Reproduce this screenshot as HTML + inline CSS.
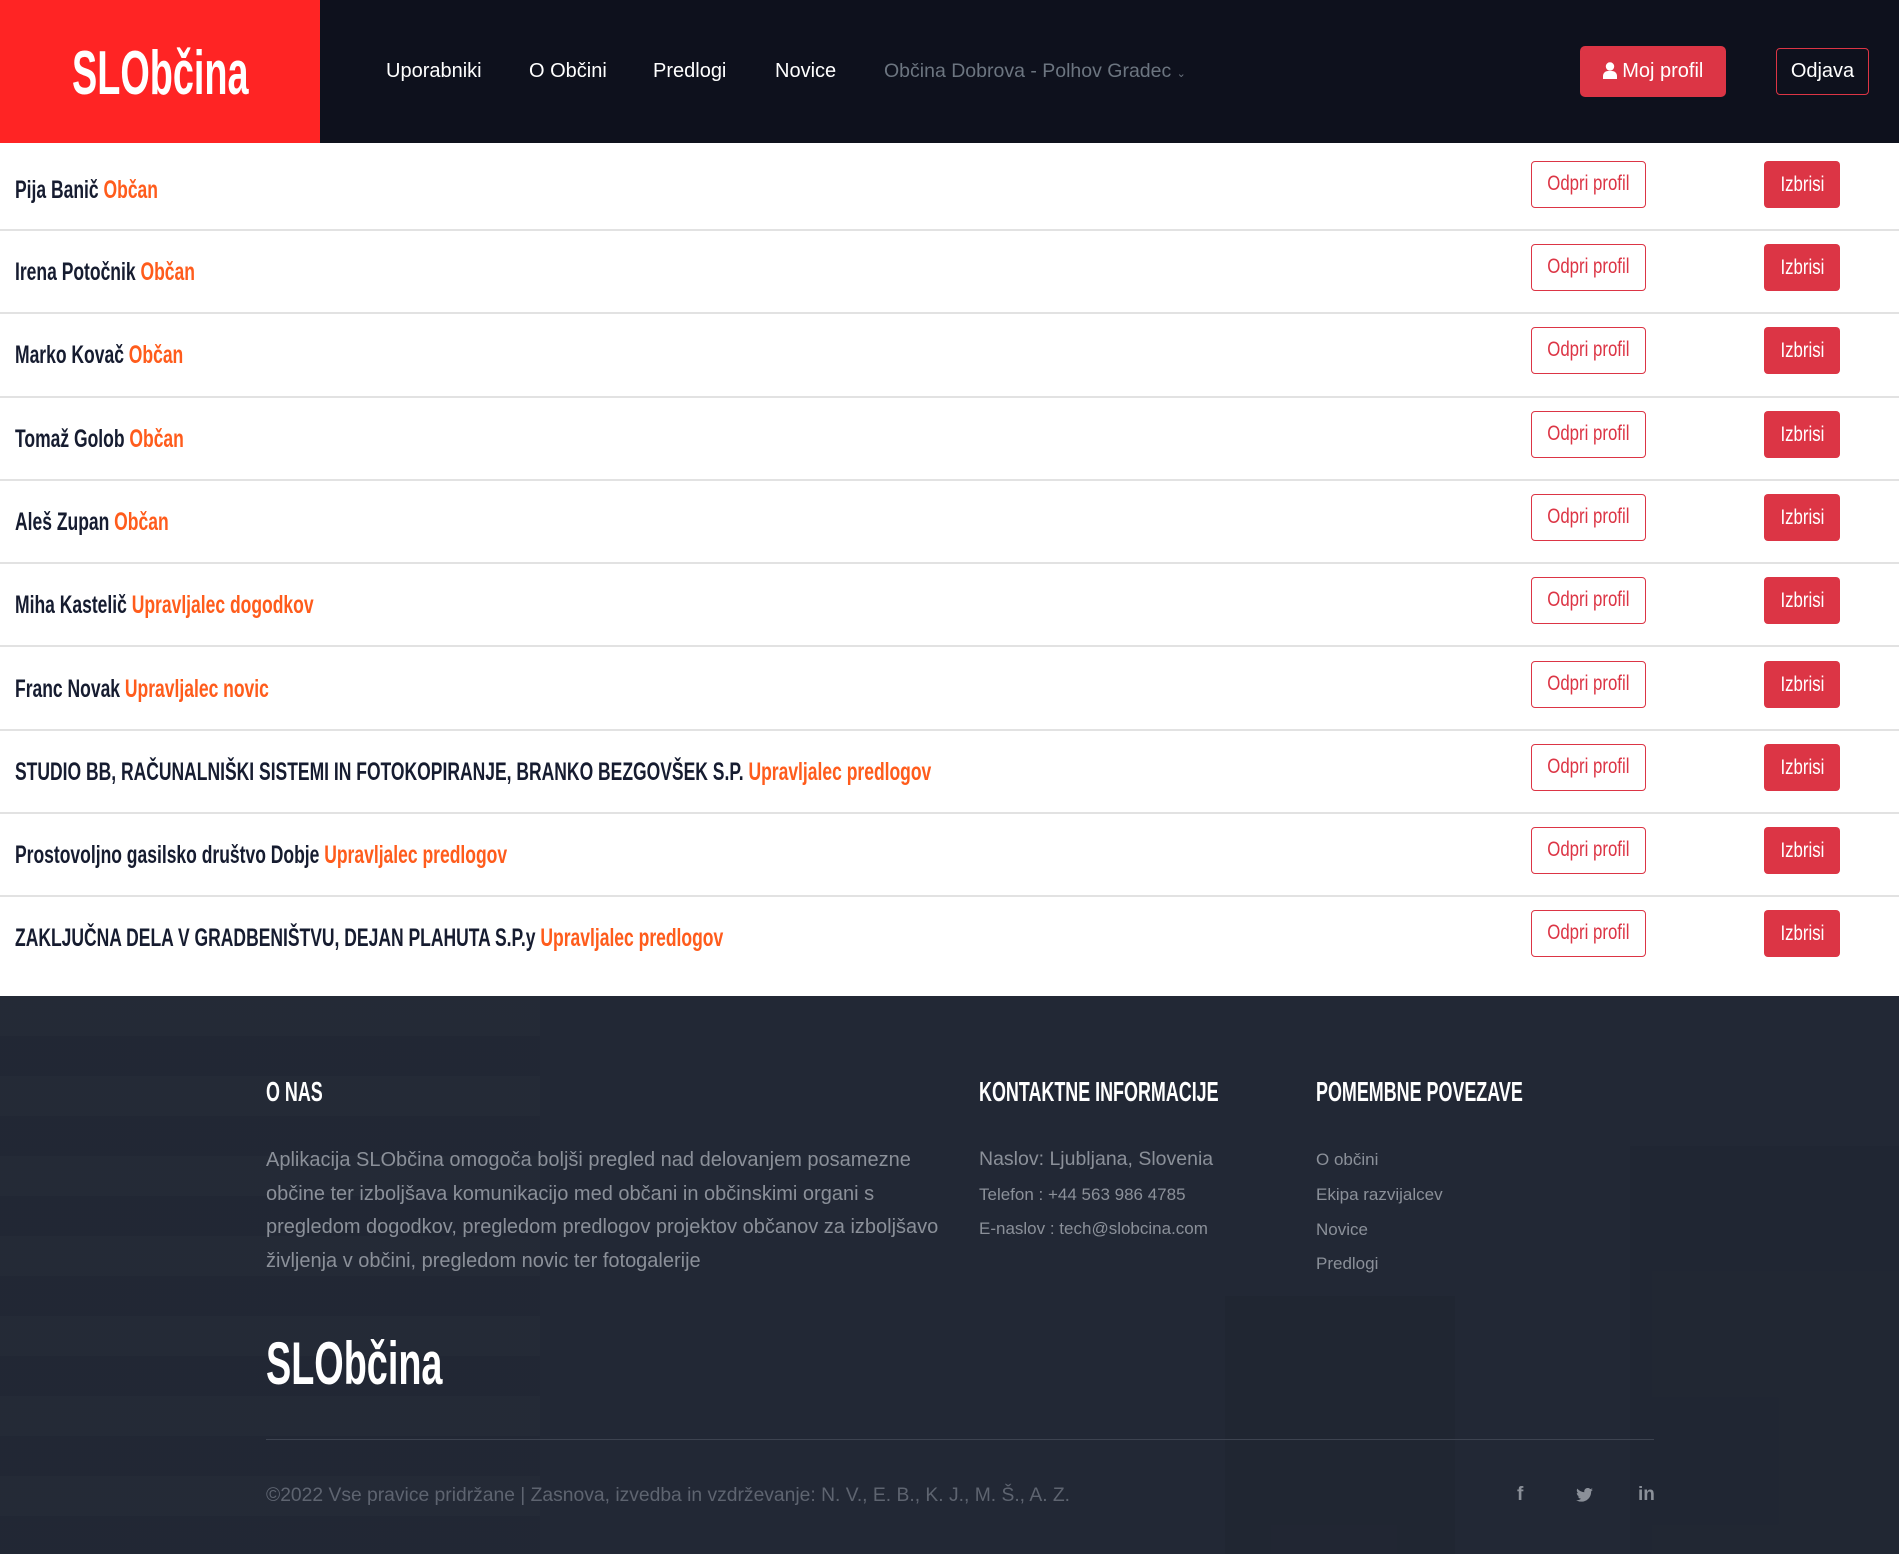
<!DOCTYPE html>
<html><head><meta charset="utf-8">
<style>
*{margin:0;padding:0;box-sizing:border-box}
body{width:1899px;height:1554px;position:relative;overflow:hidden;background:#fff;font-family:"Liberation Sans",sans-serif}
.abs{position:absolute;white-space:nowrap}
header{position:absolute;left:0;top:0;width:1899px;height:143px;background:#0e111d}
.logo{position:absolute;left:0;top:0;width:320px;height:143px;background:#ff2424}
.nav{font-size:20px;color:#fff;top:60px}
.row{position:absolute;left:0;width:1899px;border-bottom:2px solid #e2e2e2}
.name{position:absolute;left:15px;font-size:25px;color:#161c30;transform:scaleX(.70);transform-origin:0 50%;font-weight:bold;white-space:nowrap}
.name b{color:#ff5c1c}
.btn1{position:absolute;left:1531px;width:115px;height:47px;border:1.5px solid #dc3545;border-radius:4px;color:#dc3545;text-align:center;line-height:44px;font-size:21px;overflow:hidden}
.btn2{position:absolute;left:1764px;width:76px;height:47px;background:#dc3545;border-radius:4px;color:#fff;text-align:center;line-height:47px;font-size:21px;overflow:hidden}
.btn1 span,.btn2 span{display:inline-block;transform:scaleX(.8)}
footer{position:absolute;left:0;top:996px;width:1899px;height:558px;background:#222835;overflow:hidden}
.fh{color:#fff;font-size:28px;top:80px;transform:scaleX(.64);transform-origin:0 0;font-weight:bold}
.ft{color:#8b9099;font-size:20px}
.fl{color:#8b9099;font-size:17px}
</style></head><body>
<header>
<div class="logo"><div class="abs" style="left:72px;top:38px;font-size:62px;color:#fff;font-weight:bold;transform:scaleX(.61);transform-origin:0 0;">SLObčina</div></div>
<div class="abs nav" style="left:386px">Uporabniki</div>
<div class="abs nav" style="left:529px">O Občini</div>
<div class="abs nav" style="left:653px">Predlogi</div>
<div class="abs nav" style="left:775px">Novice</div>
<div class="abs nav" style="left:884px;color:#6c7580;font-size:19.5px">Občina Dobrova - Polhov Gradec <span style="font-size:11px">⌄</span></div>
<div class="abs" style="left:1580px;top:46px;width:146px;height:51px;background:#dc3545;border-radius:5px;color:#fff;font-size:20px;line-height:51px;text-align:center">
<svg width="14" height="17" viewBox="0 0 14 17" style="vertical-align:-2px"><circle cx="7" cy="4.5" r="4.2" fill="#fff"/><path d="M0 17v-3c0-3 2.5-5 5-5h4c2.5 0 5 2 5 5v3z" fill="#fff"/></svg> Moj profil</div>
<div class="abs" style="left:1776px;top:48px;width:93px;height:47px;border:1.5px solid #dc3545;border-radius:4px;color:#fff;font-size:20px;line-height:44px;text-align:center">Odjava</div>
</header>

<div class="row" style="top:143px;height:88px"><div class="name" style="top:33px">Pija Banič <b>Občan</b></div><div class="btn1" style="top:18px"><span>Odpri profil</span></div><div class="btn2" style="top:18px"><span>Izbrisi</span></div></div>
<div class="row" style="top:231px;height:83.3px"><div class="name" style="top:27px">Irena Potočnik <b>Občan</b></div><div class="btn1" style="top:13px"><span>Odpri profil</span></div><div class="btn2" style="top:13px"><span>Izbrisi</span></div></div>
<div class="row" style="top:314.3px;height:83.3px"><div class="name" style="top:27px">Marko Kovač <b>Občan</b></div><div class="btn1" style="top:13px"><span>Odpri profil</span></div><div class="btn2" style="top:13px"><span>Izbrisi</span></div></div>
<div class="row" style="top:397.6px;height:83.3px"><div class="name" style="top:27px">Tomaž Golob <b>Občan</b></div><div class="btn1" style="top:13px"><span>Odpri profil</span></div><div class="btn2" style="top:13px"><span>Izbrisi</span></div></div>
<div class="row" style="top:480.9px;height:83.3px"><div class="name" style="top:27px">Aleš Zupan <b>Občan</b></div><div class="btn1" style="top:13px"><span>Odpri profil</span></div><div class="btn2" style="top:13px"><span>Izbrisi</span></div></div>
<div class="row" style="top:564.2px;height:83.3px"><div class="name" style="top:27px">Miha Kastelič <b>Upravljalec dogodkov</b></div><div class="btn1" style="top:13px"><span>Odpri profil</span></div><div class="btn2" style="top:13px"><span>Izbrisi</span></div></div>
<div class="row" style="top:647.5px;height:83.3px"><div class="name" style="top:27px">Franc Novak <b>Upravljalec novic</b></div><div class="btn1" style="top:13px"><span>Odpri profil</span></div><div class="btn2" style="top:13px"><span>Izbrisi</span></div></div>
<div class="row" style="top:730.8px;height:83.3px"><div class="name" style="top:27px">STUDIO BB, RAČUNALNIŠKI SISTEMI IN FOTOKOPIRANJE, BRANKO BEZGOVŠEK S.P. <b>Upravljalec predlogov</b></div><div class="btn1" style="top:13px"><span>Odpri profil</span></div><div class="btn2" style="top:13px"><span>Izbrisi</span></div></div>
<div class="row" style="top:814.1px;height:83.3px"><div class="name" style="top:27px">Prostovoljno gasilsko društvo Dobje <b>Upravljalec predlogov</b></div><div class="btn1" style="top:13px"><span>Odpri profil</span></div><div class="btn2" style="top:13px"><span>Izbrisi</span></div></div>
<div class="row" style="top:897.4px;height:83.3px;border-bottom:none"><div class="name" style="top:27px">ZAKLJUČNA DELA V GRADBENIŠTVU, DEJAN PLAHUTA S.P.y <b>Upravljalec predlogov</b></div><div class="btn1" style="top:13px"><span>Odpri profil</span></div><div class="btn2" style="top:13px"><span>Izbrisi</span></div></div>

<footer>
<div class="abs" style="left:0;top:0;width:540px;height:558px;background:repeating-linear-gradient(180deg,rgba(255,255,255,0.008) 0 40px,rgba(0,0,0,0.02) 40px 80px)"></div>
<div class="abs" style="left:1630px;top:150px;width:269px;height:408px;background:rgba(0,0,0,0.03)"></div>
<div class="abs" style="left:1225px;top:300px;width:230px;height:258px;background:rgba(0,0,0,0.04)"></div>
<div class="abs fh" style="left:266px">O NAS</div>
<div class="abs fh" style="left:979px">KONTAKTNE INFORMACIJE</div>
<div class="abs fh" style="left:1316px">POMEMBNE POVEZAVE</div>
<div class="abs ft" style="left:266px;top:148px;line-height:33.6px">Aplikacija SLObčina omogoča boljši pregled nad delovanjem posamezne<br>občine ter izboljšava komunikacijo med občani in občinskimi organi s<br>pregledom dogodkov, pregledom predlogov projektov občanov za izboljšavo<br>življenja v občini, pregledom novic ter fotogalerije</div>
<div class="abs ft" style="left:979px;top:152px;font-size:19.5px">Naslov: Ljubljana, Slovenia</div>
<div class="abs fl" style="left:979px;top:189px">Telefon : +44 563 986 4785</div>
<div class="abs fl" style="left:979px;top:223px">E-naslov : tech@slobcina.com</div>
<div class="abs fl" style="left:1316px;top:154px">O občini</div>
<div class="abs fl" style="left:1316px;top:189px">Ekipa razvijalcev</div>
<div class="abs fl" style="left:1316px;top:224px">Novice</div>
<div class="abs fl" style="left:1316px;top:258px">Predlogi</div>
<div class="abs" style="left:266px;top:333px;font-size:60px;color:#fff;font-weight:bold;transform:scaleX(.63);transform-origin:0 0">SLObčina</div>
<div class="abs" style="left:266px;top:443px;width:1388px;height:1px;background:#3d4350"></div>
<div class="abs" style="left:266px;top:489px;font-size:19.3px;color:#5e6470">©2022 Vse pravice pridržane | Zasnova, izvedba in vzdrževanje: N. V., E. B., K. J., M. Š., A. Z.</div>
<div class="abs" style="left:1517px;top:488px;font-size:19px;color:#8b9099;font-weight:bold">f</div>
<svg class="abs" style="left:1576px;top:492px" width="17" height="14" viewBox="0 0 24 20"><path d="M24 2.4a10 10 0 0 1-2.8.8A5 5 0 0 0 23.3.4a10 10 0 0 1-3.1 1.2A4.9 4.9 0 0 0 11.8 6 14 14 0 0 1 1.7.9a4.9 4.9 0 0 0 1.5 6.6 4.9 4.9 0 0 1-2.2-.6 4.9 4.9 0 0 0 3.9 4.9 5 5 0 0 1-2.2.1 4.9 4.9 0 0 0 4.6 3.4A9.9 9.9 0 0 1 0 17.3 14 14 0 0 0 7.5 19.5c9 0 14-7.5 14-14v-.6A10 10 0 0 0 24 2.4z" fill="#8b9099"/></svg>
<div class="abs" style="left:1638px;top:488px;font-size:19px;color:#8b9099;font-weight:bold">in</div>
</footer>
</body></html>
